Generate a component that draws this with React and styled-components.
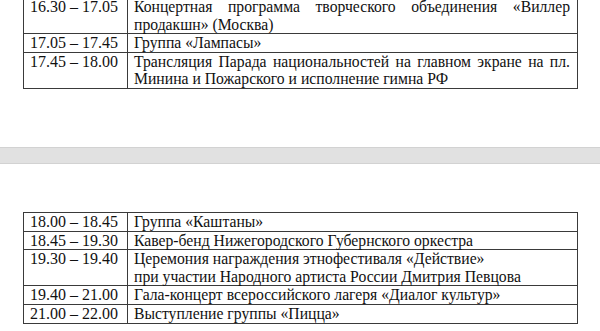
import React from 'react';
import styled, { createGlobalStyle } from 'styled-components';

const GlobalStyle = createGlobalStyle`
  html, body {
    margin: 0;
    padding: 0;
    background: #fff;
    overflow: hidden;
  }
`;

const Page = styled.main`
  width: 600px;
  height: 331px;
  overflow: hidden;
  background: #fff;
`;

const Sheet = styled.section`
  padding: 0 0 0 23px;
  margin-top: ${({ $offset }) => $offset || 0}px;
  margin-bottom: ${({ $after }) => $after || 0}px;
`;

const Schedule = styled.table`
  border-collapse: collapse;
  width: 555px;
  table-layout: fixed;
  font-family: 'Liberation Serif', 'Times New Roman', serif;
  font-size: 15.7px;
  color: #111;
`;

const Time = styled.td`
  width: 104px;
  border: 1px solid #3a3a3a;
  padding: 0 0 0 6px;
  font-size: 16px;
  line-height: 17.6px;
  vertical-align: top;
  white-space: nowrap;
  box-sizing: border-box;
`;

const Event = styled.td`
  border: 1px solid #3a3a3a;
  padding: 0 7px 0 6px;
  line-height: 17.6px;
  vertical-align: top;
  text-align: justify;
`;

const PageGap = styled.div`
  height: 15px;
  background: #e1e1e1;
  border-top: 1px solid #d2d2d2;
  border-bottom: 1px solid #d2d2d2;
`;

const first = [
  ['16.30 – 17.05', 'Концертная программа творческого объединения «Виллер продакшн» (Москва)'],
  ['17.05 – 17.45', 'Группа «Лампасы»'],
  ['17.45 – 18.00', 'Трансляция Парада национальностей на главном экране на пл. Минина и Пожарского и исполнение гимна РФ'],
];

const second = [
  ['18.00 – 18.45', 'Группа «Каштаны»'],
  ['18.45 – 19.30', 'Кавер-бенд Нижегородского Губернского оркестра'],
  ['19.30 – 19.40', <>Церемония награждения этнофестиваля «Действие»<br />при участии Народного артиста России Дмитрия Певцова</>],
  ['19.40 – 21.00', 'Гала-концерт всероссийского лагеря «Диалог культур»'],
  ['21.00 – 22.00', 'Выступление группы «Пицца»'],
];

function ScheduleTable({ rows }) {
  return (
    <Schedule>
      <tbody>
        {rows.map(([time, text]) => (
          <tr key={time}>
            <Time>{time}</Time>
            <Event>{text}</Event>
          </tr>
        ))}
      </tbody>
    </Schedule>
  );
}

export default function App() {
  return (
    <Page>
      <GlobalStyle />
      <Sheet $offset={-3} $after={58}>
        <ScheduleTable rows={first} />
      </Sheet>
      <PageGap />
      <Sheet $offset={48}>
        <ScheduleTable rows={second} />
      </Sheet>
    </Page>
  );
}
